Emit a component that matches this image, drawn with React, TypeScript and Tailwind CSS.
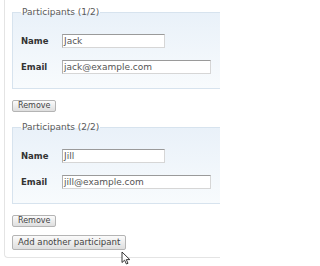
import React from 'react';

type Participant = { name: string; email: string };

const participants: Participant[] = [
  { name: 'Jack', email: 'jack@example.com' },
  { name: 'Jill', email: 'jill@example.com' },
];

const font = { fontFamily: '"DejaVu Sans", Verdana, sans-serif' };

function Field({ label, value, width }: { label: string; value: string; width: string }) {
  return (
    <div className="flex items-center h-[14px]">
      <span className="w-[41px] shrink-0 text-[8.5px] font-bold text-[#333]">{label}</span>
      <div
        className={`${width} h-[14px] bg-white border border-[#d6d6d6] border-t-[#9a9a9a] border-l-[#b0b0b0] pl-[1px] flex items-center text-[9px] leading-none text-[#555]`}
      >
        {value}
      </div>
    </div>
  );
}

function Button({ children, size }: { children: React.ReactNode; size: string }) {
  return (
    <button
      className={`${size} px-[5px] border border-[#b4b4b4] rounded-[2px] bg-gradient-to-b from-[#fbfbfb] to-[#dedede] text-[#444] leading-none flex items-center`}
    >
      {children}
    </button>
  );
}

export default function App() {
  return (
    <div className="relative w-[220px] h-[266px] overflow-hidden bg-white" style={font}>
      <div className="ml-[4px] w-[260px] border-l border-b border-[#e4e4e4] rounded-bl-[4px] pl-[7px] pt-[5px] pb-[7px]">
        {participants.map((p, i) => (
          <div key={p.name} className={i > 0 ? 'mt-[8px]' : ''}>
            <fieldset className="border border-[#d7e3ee] bg-gradient-to-b from-[#e9f1f9] to-[#f8fbfd] pl-[8px] pt-[15px] pb-[14px]">
              <legend className="px-[1px] text-[9px] leading-[14px] text-[#5a5a5a]">
                Participants ({i + 1}/{participants.length})
              </legend>
              <div className="flex flex-col gap-[12px]">
                <Field label="Name" value={p.name} width="w-[103px]" />
                <Field label="Email" value={p.email} width="w-[149px]" />
              </div>
            </fieldset>
            <div className="mt-[11px]">
              <Button size="h-[12px] text-[8px]">Remove</Button>
            </div>
          </div>
        ))}
        <div className="mt-[8px]">
          <Button size="h-[15px] text-[8.6px]">Add another participant</Button>
        </div>
      </div>
      <svg className="absolute left-[121px] top-[251px]" width="11" height="14" viewBox="0 0 11 14">
        <path d="M1 1 L1 11.5 L3.6 9.2 L5.4 13 L7 12.3 L5.3 8.6 L8.8 8.6 Z" fill="#fff" stroke="#222" strokeWidth="0.9" strokeLinejoin="round" />
      </svg>
    </div>
  );
}
